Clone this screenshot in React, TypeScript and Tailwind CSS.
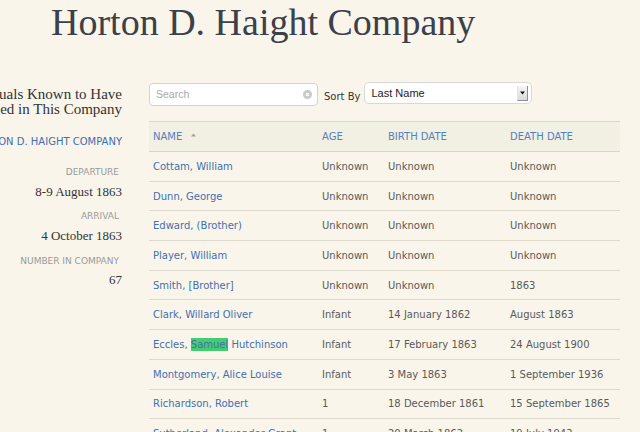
import React from 'react'

interface Person {
  name: string
  age: string
  birth: string
  death: string
  highlight?: [string, string, string]
}

// Rows as listed in the company roster
const people: Person[] = [
  { name: 'Cottam, William', age: 'Unknown', birth: 'Unknown', death: 'Unknown' },
  { name: 'Dunn, George', age: 'Unknown', birth: 'Unknown', death: 'Unknown' },
  { name: 'Edward, (Brother)', age: 'Unknown', birth: 'Unknown', death: 'Unknown' },
  { name: 'Player, William', age: 'Unknown', birth: 'Unknown', death: 'Unknown' },
  { name: 'Smith, [Brother]', age: 'Unknown', birth: 'Unknown', death: '1863' },
  { name: 'Clark, Willard Oliver', age: 'Infant', birth: '14 January 1862', death: 'August 1863' },
  {
    name: 'Eccles, Samuel Hutchinson',
    age: 'Infant',
    birth: '17 February 1863',
    death: '24 August 1900',
    highlight: ['Eccles, ', 'Samuel', ' Hutchinson'],
  },
  { name: 'Montgomery, Alice Louise', age: 'Infant', birth: '3 May 1863', death: '1 September 1936' },
  { name: 'Richardson, Robert', age: '1', birth: '18 December 1861', death: '15 September 1865' },
  { name: 'Sutherland, Alexander Grant', age: '1', birth: '20 March 1862', death: '19 July 1943' },
]

const serif = "font-['Liberation_Serif',serif]"
const sans = "font-['DejaVu_Sans',sans-serif]"

const Sidebar: React.FC = () => (
  <aside className="w-[122px] shrink-0 flex flex-col items-end text-[#333]">
    <h2 className={`${serif} mt-[46px] text-[15px] leading-[15px] text-right whitespace-nowrap`}>
      Individuals Known to Have
      <br />
      Traveled in This Company
    </h2>
    <a className={`${sans} mt-[19px] text-[10px] leading-[12px] text-[#3f6db3] whitespace-nowrap`}>
      HORTON D. HAIGHT COMPANY
    </a>

    <div className={`${sans} mt-[19px] mr-[3px] text-[9px] leading-[11px] text-[#9a9a9a] whitespace-nowrap`}>
      DEPARTURE
    </div>
    <div className={`${serif} mt-[6px] text-[13px] leading-[15px] whitespace-nowrap`}>8-9 August 1863</div>

    <div className={`${sans} mt-[12px] mr-[3px] text-[9px] leading-[11px] text-[#9a9a9a] whitespace-nowrap`}>
      ARRIVAL
    </div>
    <div className={`${serif} mt-[6px] text-[13px] leading-[15px] whitespace-nowrap`}>4 October 1863</div>

    <div className={`${sans} mt-[13px] mr-[3px] text-[9px] leading-[11px] text-[#9a9a9a] whitespace-nowrap`}>
      NUMBER IN COMPANY
    </div>
    <div className={`${serif} mt-[5px] text-[13px] leading-[15px] whitespace-nowrap`}>67</div>
  </aside>
)

const Toolbar: React.FC = () => (
  <div className="flex items-start">
    {/* Search */}
    <div className="mt-[1px] w-[169px] h-[23px] flex items-center bg-white border border-[#d2d2d2] rounded-[4px] pl-[6px] pr-[5px]">
      <span className="flex-1 pt-[1px] font-['Liberation_Sans',sans-serif] text-[10.5px] text-[#a8a8a8]">Search</span>
      <span className="w-[9px] h-[9px] rounded-full bg-[#c9c9c9] flex items-center justify-center">
        <svg width="5" height="5" viewBox="0 0 5 5">
          <path d="M1 1L4 4M4 1L1 4" stroke="white" strokeWidth="1.1" />
        </svg>
      </span>
    </div>

    <span className={`${sans} ml-[6px] mt-[9px] text-[10px] leading-[12px] text-[#333]`}>Sort By</span>

    {/* Sort select */}
    <div className="ml-[4px] w-[168px] h-[22px] flex items-center bg-white border border-[#d8d8d8] rounded-[5px] pl-[6px] pr-[3px]">
      <span className="flex-1 font-['Liberation_Sans',sans-serif] text-[11px] text-[#222]">Last Name</span>
      <span className="w-[11px] h-[15px] flex items-center justify-center bg-gradient-to-b from-[#f6f6f6] to-[#dadada] border-r border-b border-[#8f8f8f] border-l border-l-[#e2e2e2]">
        <svg width="5" height="4" viewBox="0 0 5 4">
          <path d="M0 0.5H5L2.5 3.5Z" fill="#111" />
        </svg>
      </span>
    </div>
  </div>
)

const cols = 'grid grid-cols-[169px_66px_122px_114px]'

const Table: React.FC = () => (
  <div className={`${sans} mt-[15px] text-[10px]`}>
    <div className={`${cols} h-[31px] items-center bg-[#f2efe3] border-y border-[#d9d5c9] text-[#5281c2]`}>
      <div className="pl-[4px] flex items-center gap-[9px]">
        NAME
        <svg width="5" height="4" viewBox="0 0 5 4" className="mb-[3px]">
          <path d="M0 3.5H5L2.5 0.5Z" fill="#a0a0a0" />
        </svg>
      </div>
      <div className="pl-[4px]">AGE</div>
      <div className="pl-[4px]">BIRTH DATE</div>
      <div className="pl-[4px]">DEATH DATE</div>
    </div>
    {people.map((p) => (
      <div key={p.name} className={`${cols} h-[29.7px] items-center border-b border-[#ddd9cd] text-[#5a5a5a]`}>
        <div className="pl-[4px] text-[#4270b2] whitespace-nowrap">
          {p.highlight ? (
            <>
              {p.highlight[0]}
              <span className="bg-[#42cd71] py-[1px]">{p.highlight[1]}</span>
              {p.highlight[2]}
            </>
          ) : (
            p.name
          )}
        </div>
        <div className="pl-[4px]">{p.age}</div>
        <div className="pl-[4px]">{p.birth}</div>
        <div className="pl-[4px]">{p.death}</div>
      </div>
    ))}
  </div>
)

export default function App() {
  return (
    <div className="w-[640px] h-[432px] overflow-hidden bg-[#f9f5ea]">
      <h1 className={`${serif} pl-[51px] pt-[3px] text-[38px] leading-[38px] text-[#3b404a]`}>
        Horton D. Haight Company
      </h1>
      <div className="flex">
        <Sidebar />
        <main className="ml-[27px] w-[471px] pt-[41px]">
          <Toolbar />
          <Table />
        </main>
      </div>
    </div>
  )
}
